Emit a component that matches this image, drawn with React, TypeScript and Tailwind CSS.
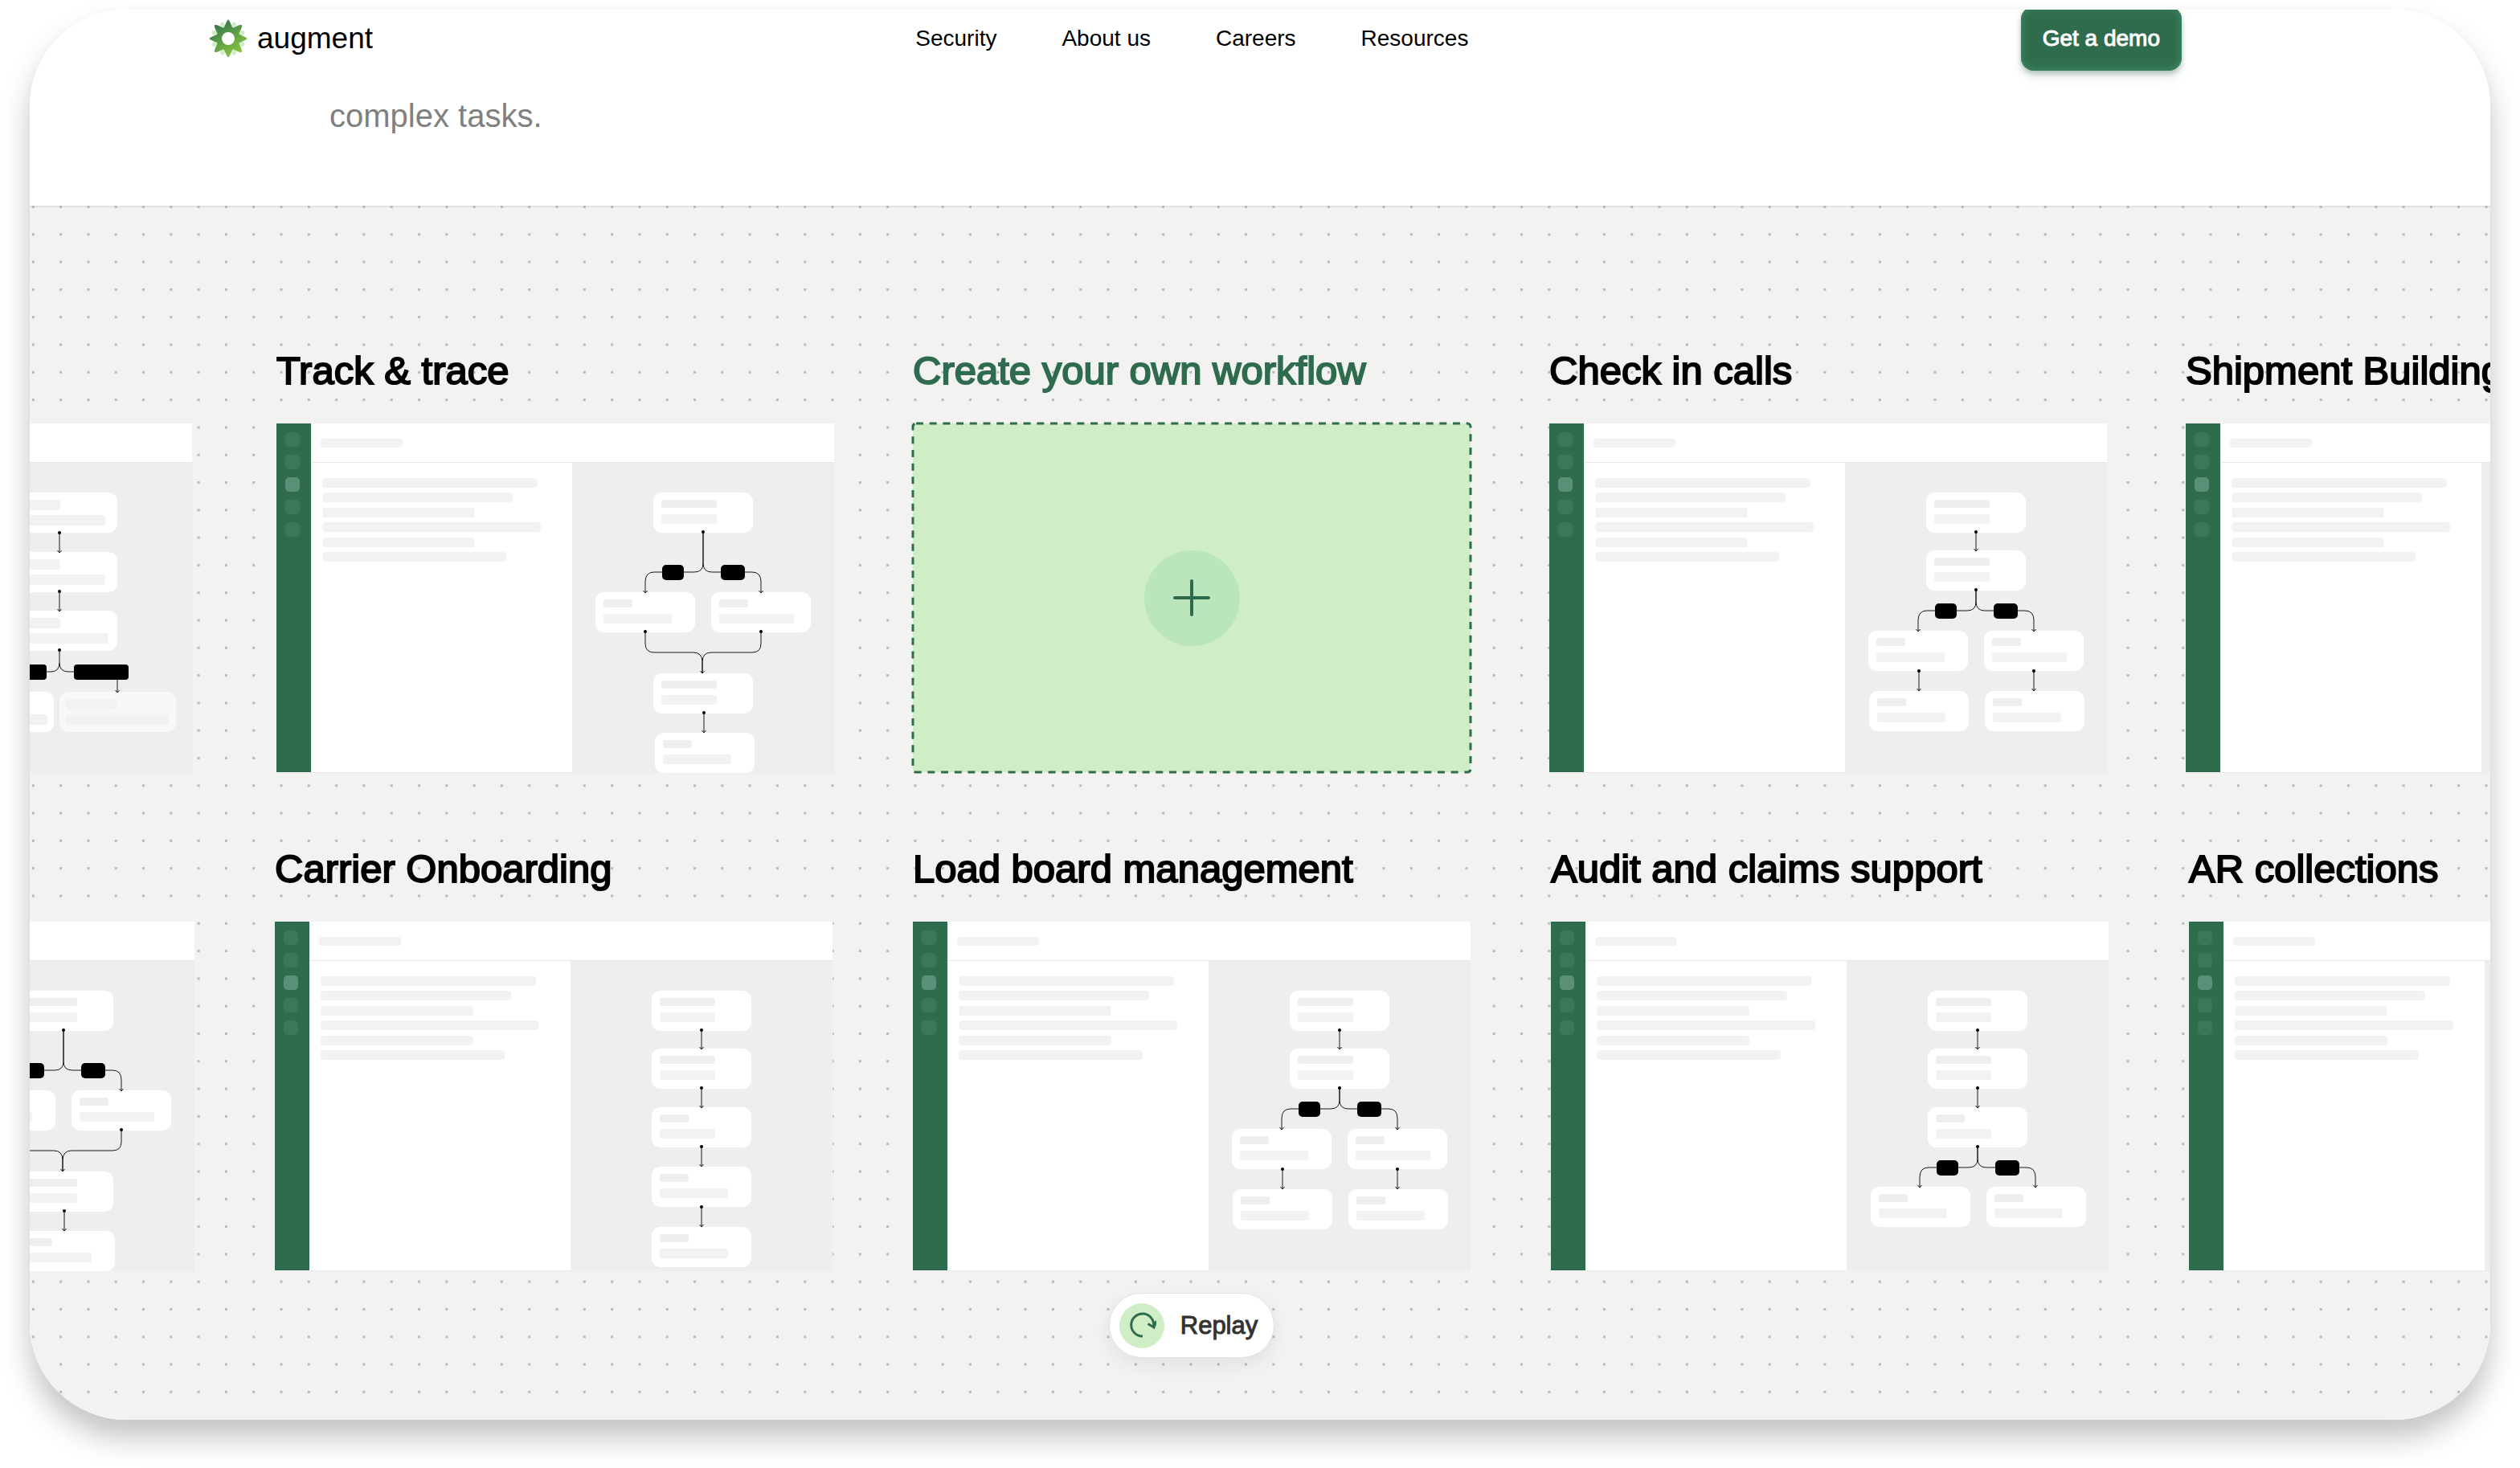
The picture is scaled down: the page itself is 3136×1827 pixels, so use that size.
import React from "react";

type NodeSpec = {
  x: number;
  y: number;
  top: number;
  bottom: number;
  w?: number;
  h?: number;
  inset?: number;
  faded?: boolean;
};

const NODE_W = 124;
const NODE_H = 50;

function FlowNode({ x, y, top, bottom, w = NODE_W, h = NODE_H, inset = 10, faded }: NodeSpec) {
  const wide = w > NODE_W;
  return (
    <g>
      <rect x={x} y={y} width={w} height={h} rx={11} fill={faded ? "#f8f8f8" : "#ffffff"} />
      <rect x={x + inset} y={y + 9} width={top} height={wide ? 13 : 10} rx={3} fill={wide ? "#f2f2f0" : "#eeeeec"} />
      <rect x={x + inset} y={y + (wide ? 28 : 27)} width={bottom} height={wide ? 13 : 12} rx={3} fill="#f2f2f0" />
    </g>
  );
}

function Arrow({ x, from, to, dot = true }: { x: number; from: number; to: number; dot?: boolean }) {
  return (
    <g stroke="#1a1a1a" strokeWidth={1} fill="none">
      <path d={`M${x} ${from}V${to}M${x - 2.5} ${to - 3}L${x} ${to}L${x + 2.5} ${to - 3}`} />
      {dot && <circle cx={x} cy={from} r={2} fill="#000000" stroke="none" />}
    </g>
  );
}

/* Stem that splits into two labelled branches and ends in arrows above the next nodes. */
function Split({ from, turn, to }: { from: number; turn: number; to: number }) {
  return (
    <g>
      <g stroke="#1a1a1a" strokeWidth={1} fill="none">
        <path d={`M163 ${from}V${turn - 11}Q163 ${turn} 152 ${turn}H102Q91 ${turn} 91 ${turn + 12}V${to}`} />
        <path d={`M163 ${from}V${turn - 11}Q163 ${turn} 174 ${turn}H224Q235 ${turn} 235 ${turn + 12}V${to}`} />
        <path d={`M88.5 ${to - 3}L91 ${to}L93.5 ${to - 3}M232.5 ${to - 3}L235 ${to}L237.5 ${to - 3}`} />
      </g>
      <circle cx={163} cy={from} r={2} />
      <rect x={112} y={turn - 9} width={27} height={19} rx={5} />
      <rect x={185} y={turn - 9} width={30} height={19} rx={5} />
    </g>
  );
}

function MergeFlow() {
  return (
    <>
      <FlowNode x={101} y={37} top={69} bottom={69} />
      <FlowNode x={29} y={161} top={36} bottom={85} />
      <FlowNode x={173} y={161} top={36} bottom={93} />
      <FlowNode x={101} y={262} top={69} bottom={69} />
      <FlowNode x={103} y={336} top={36} bottom={85} />
      <Split from={86} turn={136} to={162} />
      <g stroke="#1a1a1a" strokeWidth={1} fill="none">
        <path d="M91 210V225Q91 236 102 236H151Q162 236 162 248V262" />
        <path d="M235 210V225Q235 236 224 236H173Q162 236 162 248V262" />
        <path d="M159.500 259L162 262L164.500 259" />
      </g>
      <circle cx={91} cy={210} r={2} />
      <circle cx={235} cy={210} r={2} />
      <Arrow x={164} from={311} to={336} />
    </>
  );
}

function BranchFlow() {
  return (
    <>
      <FlowNode x={101} y={37} top={69} bottom={69} />
      <FlowNode x={101} y={109} top={69} bottom={69} />
      <FlowNode x={29} y={209} top={36} bottom={85} />
      <FlowNode x={173} y={209} top={36} bottom={93} />
      <FlowNode x={30} y={284} top={36} bottom={85} />
      <FlowNode x={174} y={284} top={36} bottom={85} />
      <Arrow x={163} from={86} to={110} />
      <Split from={158} turn={184} to={210} />
      <Arrow x={92} from={259} to={284} />
      <Arrow x={235} from={259} to={284} />
    </>
  );
}

function ChainFlow() {
  return (
    <>
      <FlowNode x={101} y={37} top={69} bottom={69} />
      <FlowNode x={101} y={109} top={69} bottom={69} />
      <FlowNode x={101} y={182} top={36} bottom={69} />
      <FlowNode x={101} y={256} top={36} bottom={85} />
      <FlowNode x={101} y={331} top={36} bottom={85} />
      <Arrow x={163} from={86} to={110} />
      <Arrow x={163} from={158} to={183} />
      <Arrow x={163} from={231} to={256} />
      <Arrow x={163} from={306} to={331} />
    </>
  );
}

function LateBranchFlow() {
  return (
    <>
      <FlowNode x={101} y={37} top={69} bottom={69} />
      <FlowNode x={101} y={109} top={69} bottom={69} />
      <FlowNode x={101} y={182} top={36} bottom={69} />
      <FlowNode x={30} y={281} top={36} bottom={85} />
      <FlowNode x={174} y={281} top={36} bottom={85} />
      <Arrow x={163} from={86} to={110} />
      <Arrow x={163} from={158} to={183} />
      <Split from={231} turn={257} to={282} />
    </>
  );
}

function WideFlow() {
  return (
    <>
      <FlowNode x={88} y={37} w={145} inset={8} top={66} bottom={122} />
      <FlowNode x={88} y={111} w={145} inset={8} top={66} bottom={122} />
      <FlowNode x={88} y={184} w={145} inset={8} top={66} bottom={126} />
      <FlowNode x={9} y={285} w={145} inset={8} top={63} bottom={129} />
      <FlowNode x={161} y={285} w={145} inset={8} top={63} bottom={129} faded />
      <Arrow x={161} from={87} to={112} />
      <Arrow x={161} from={160} to={185} />
      <g stroke="#1a1a1a" strokeWidth={1} fill="none">
        <path d="M161 234V249Q161 260 150 260H140M161 249Q161 260 172 260H182" />
      </g>
      <circle cx={161} cy={233} r={2} />
      <rect x={75} y={251} width={70} height={19} rx={4} />
      <rect x={179} y={251} width={68} height={19} rx={4} />
      <Arrow x={233} from={270} to={286} dot={false} />
    </>
  );
}

function Placeholder() {
  return (
    <div className="flex h-[104px] flex-col justify-between">
      <div className="h-3 w-[268px] rounded bg-[#f2f2f1]" />
      <div className="h-3 w-[237px] rounded bg-[#f2f2f1]" />
      <div className="h-3 w-[190px] rounded bg-[#f2f2f1]" />
      <div className="h-3 w-[272px] rounded bg-[#f2f2f1]" />
      <div className="h-3 w-[190px] rounded bg-[#f2f2f1]" />
      <div className="h-3 w-[229px] rounded bg-[#f2f2f1]" />
    </div>
  );
}

function MockWindow({ children }: { children: React.ReactNode }) {
  return (
    <div className="flex h-[434px]">
      <div className="w-[43px] shrink-0 bg-[#2f6c4e] pl-[11px] pt-[11px]">
        <div className="flex h-[130px] flex-col justify-between">
          <div className="size-[18px] rounded-[5px] bg-[#3b775a]" />
          <div className="size-[18px] rounded-[5px] bg-[#3b775a]" />
          <div className="size-[18px] rounded-[5px] bg-[#5a9078]" />
          <div className="size-[18px] rounded-[5px] bg-[#3b775a]" />
          <div className="size-[18px] rounded-[5px] bg-[#3b775a]" />
        </div>
      </div>
      <div className="flex min-w-0 grow flex-col">
        <div className="flex h-[49px] shrink-0 items-center border-b border-[#e8e8e6] bg-white pl-3">
          <div className="h-[11px] w-[102px] rounded bg-[#f2f2f1]" />
        </div>
        <div className="flex grow">
          <div className="grow border-b border-[#e8e8e6] bg-white pl-[14px] pt-[19px]">
            <Placeholder />
          </div>
          <div className="w-[326px] shrink-0 bg-[#eeeeec]">
            <svg viewBox="0 0 326 386" width="326" height="386" aria-hidden="true">
              {children}
            </svg>
          </div>
        </div>
      </div>
    </div>
  );
}

function Workflow({ title, children }: { title?: string; children: React.ReactNode }) {
  return (
    <article className="w-[694px] shrink-0">
      <h2 className="mb-9 h-[60px] whitespace-nowrap text-[49px] leading-[60px] text-black [-webkit-text-stroke:2px_#000]">
        {title}
      </h2>
      {children}
    </article>
  );
}

function CreateWorkflow() {
  return (
    <article className="w-[694px] shrink-0">
      <h2
        id="create-title"
        className="mb-9 h-[60px] whitespace-nowrap text-[49px] leading-[60px] text-[#2f6c4e] [-webkit-text-stroke:2px_#2f6c4e]"
      >
        Create your own workflow
      </h2>
      <button
        type="button"
        aria-labelledby="create-title"
        className="relative flex h-[434px] w-full items-center justify-center rounded bg-[#cfeec5]"
      >
        <svg className="absolute inset-0 size-full overflow-visible" aria-hidden="true">
          <rect width="100%" height="100%" rx="4" fill="none" stroke="#2f6c4e" strokeWidth="3" strokeDasharray="9 7.700" />
        </svg>
        <span className="flex size-[119px] items-center justify-center rounded-full bg-[#bbe6bb]">
          <svg width="46" height="46" viewBox="0 0 46 46" stroke="#2f6c4e" strokeWidth="4" strokeLinecap="round" aria-hidden="true">
            <path d="M23 2V44M2 23H44" />
          </svg>
        </span>
      </button>
    </article>
  );
}

function LogoMark() {
  const angles = [0, 45, 90, 135, 180, 225, 270, 315];
  return (
    <svg width="48" height="48" viewBox="-24 -24 48 48" aria-hidden="true">
      <defs>
        <linearGradient id="petals" gradientUnits="userSpaceOnUse" x1="-12" y1="-20" x2="12" y2="20">
          <stop offset="0" stopColor="#36784d" />
          <stop offset="1" stopColor="#8cc63f" />
        </linearGradient>
        <mask id="ring">
          <rect x="-24" y="-24" width="48" height="48" fill="#fff" />
          <circle r="8" fill="#000" />
        </mask>
      </defs>
      {angles.map((a) => (
        <ellipse key={a} cx="0" cy="-17" rx="3.300" ry="5" fill="#cfeec5" transform={`rotate(${a + 22.5})`} />
      ))}
      <path
        mask="url(#ring)"
        fill="url(#petals)"
        d="M0 -23.800C2 -22 3.400 -18 4.600 -14.800C5.600 -13 7 -13.400 8.500 -14.300C11.500 -16 14.500 -17.600 17 -16.800C17.600 -14.500 16 -11.500 14.300 -8.500C13.400 -7 13 -5.600 14.800 -4.600C18 -3.400 22 -2 23.800 0C22 2 18 3.400 14.800 4.600C13 5.600 13.400 7 14.300 8.500C16 11.500 17.600 14.500 17 16.800C14.500 17.600 11.500 16 8.500 14.300C7 13.400 5.600 13 4.600 14.800C3.400 18 2 22 0 23.800C-2 22 -3.400 18 -4.600 14.800C-5.600 13 -7 13.400 -8.500 14.300C-11.500 16 -14.500 17.600 -17 16.800C-17.600 14.500 -16 11.500 -14.300 8.500C-13.400 7 -13 5.600 -14.800 4.600C-18 3.400 -22 2 -23.800 0C-22 -2 -18 -3.400 -14.800 -4.600C-13 -5.600 -13.400 -7 -14.300 -8.500C-16 -11.500 -17.600 -14.500 -17 -16.800C-14.500 -17.600 -11.500 -16 -8.500 -14.300C-7 -13.400 -5.600 -13 -4.600 -14.800C-3.400 -18 -2 -22 0 -23.800Z"
      />
    </svg>
  );
}

function DotGrid() {
  return (
    <svg className="absolute inset-x-0 -top-0.5 h-full w-full" aria-hidden="true">
      <defs>
        <pattern id="dots" width="34.300" height="34.300" patternUnits="userSpaceOnUse">
          <rect x="2.800" y="0" width="3" height="3" fill="#b8b8b6" />
        </pattern>
      </defs>
      <rect width="100%" height="100%" fill="url(#dots)" />
    </svg>
  );
}

export default function App() {
  return (
    <div className="min-h-screen overflow-hidden bg-white px-[37px] pb-[61px] pt-3 font-['Liberation_Sans',Arial,sans-serif]">
      <div className="rounded-[120px] shadow-[0_22px_36px_rgba(0,0,0,0.24)]">
        <div className="overflow-hidden rounded-[120px] bg-white">
          <header className="flex h-[72px] items-center justify-between pl-[223px] pr-[384px]">
            <a href="#" className="flex items-center gap-3 text-[37px] leading-[48px] text-black">
              <LogoMark />
              augment
            </a>
            <nav className="mr-3 flex gap-[81px] text-[28px] leading-9 text-black">
              <a href="#security">Security</a>
              <a href="#about">About us</a>
              <a href="#careers">Careers</a>
              <a href="#resources">Resources</a>
            </nav>
            <button
              type="button"
              className="h-20 rounded-2xl bg-[#2f6c4e] px-[27px] text-[28px] leading-9 text-white shadow-[inset_0_0_12px_#418f68,0_4px_6px_rgba(47,108,78,0.35),0_10px_16px_rgba(0,0,0,0.06)] [-webkit-text-stroke:1px_#fff]"
            >
              Get a demo
            </button>
          </header>

          <p className="pb-[88px] pl-[373px] pt-9 text-[40px] leading-[48px] text-[#808080]">complex tasks.</p>

          <section className="relative border-t-2 border-[#e2e2e0] bg-[#f2f2f0] pb-[77px] pr-[170px] pt-[173px]">
            <DotGrid />
            <div className="relative flex flex-col gap-[90px]">
              <div className="flex justify-center gap-[98px]">
                <Workflow>
                  <div className="pr-[7px]">
                    <MockWindow>
                      <WideFlow />
                    </MockWindow>
                  </div>
                </Workflow>
                <Workflow title="Track &amp; trace">
                  <MockWindow>
                    <MergeFlow />
                  </MockWindow>
                </Workflow>
                <CreateWorkflow />
                <Workflow title="Check in calls">
                  <MockWindow>
                    <BranchFlow />
                  </MockWindow>
                </Workflow>
                <Workflow title="Shipment Building">
                  <MockWindow>
                    <ChainFlow />
                  </MockWindow>
                </Workflow>
              </div>
              <div className="flex justify-center gap-[100px]">
                <Workflow>
                  <MockWindow>
                    <MergeFlow />
                  </MockWindow>
                </Workflow>
                <Workflow title="Carrier Onboarding">
                  <MockWindow>
                    <ChainFlow />
                  </MockWindow>
                </Workflow>
                <Workflow title="Load board management">
                  <MockWindow>
                    <BranchFlow />
                  </MockWindow>
                </Workflow>
                <Workflow title="Audit and claims support">
                  <MockWindow>
                    <LateBranchFlow />
                  </MockWindow>
                </Workflow>
                <Workflow title="AR collections">
                  <MockWindow>
                    <BranchFlow />
                  </MockWindow>
                </Workflow>
              </div>
            </div>
            <div className="relative mt-7 flex justify-center">
              <button
                type="button"
                className="flex h-[81px] items-center gap-5 rounded-full border border-[#e2e2e0] bg-white pl-3 pr-5 text-[31px] leading-9 text-[#333333] shadow-[0_8px_24px_rgba(0,0,0,0.07)] [-webkit-text-stroke:1px_#333]"
              >
                <span className="flex size-14 items-center justify-center rounded-full bg-[#cfeec5]">
                  <svg width="36" height="36" viewBox="0 0 36 36" fill="none" stroke="#2f6c4e" strokeWidth="3" aria-hidden="true">
                    <path d="M19 31A14 14 0 1 1 32.500 19.500" />
                    <path d="M25.500 15.500L33 20L36 12" />
                  </svg>
                </span>
                Replay
              </button>
            </div>
          </section>
        </div>
      </div>
    </div>
  );
}
